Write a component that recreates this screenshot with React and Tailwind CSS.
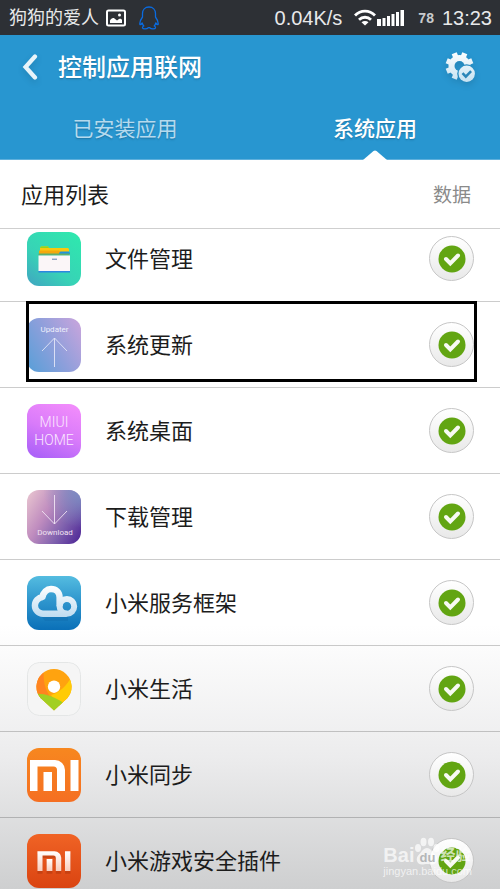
import React, {useState} from 'react'

const fontCjk = "font-['Roboto','Noto_Sans_CJK_SC',sans-serif]"
const iconBox = "w-[54px] h-[54px] rounded-xl shrink-0"

const FilesIcon = () => (
    <svg viewBox="0 0 54 54" className={iconBox} aria-hidden="true">
        <defs>
            <linearGradient id="files" x1="0.9" y1="0" x2="0.1" y2="1">
                <stop offset="0" stopColor="#2fe8ae"/>
                <stop offset="0.6" stopColor="#37d3b6"/>
                <stop offset="1" stopColor="#3fa9c0"/>
            </linearGradient>
        </defs>
        <rect width="54" height="54" fill="url(#files)"/>
        <path d="M13 21V16l1-1.500h7l1 1.500h19l1 1v5H12z" fill="#f9c80e"/>
        <path d="M13 16l1-1.500h7l1 1.500z" fill="#8fd61e"/>
        <path d="M12 18.500h20l2 1.500h8v2H12z" fill="#f5a80c"/>
        <path d="M32 21l1.500-1.500H42l1 1.500v1H32z" fill="#2192dc"/>
        <path d="M11.500 21.500h31v2h-31z" fill="#5fae6e"/>
        <path d="M11.500 23.500h31.500V39H11.500z" fill="#fbf6f8"/>
        <path d="M11.500 39H43v1.500H11.500z" fill="#2c86e0"/>
        <path d="M25 27.200h5" stroke="#5a7fa8" strokeWidth="1"/>
    </svg>
)

const UpdaterIcon = () => (
    <svg viewBox="0 0 54 54" className={iconBox} aria-hidden="true">
        <defs>
            <linearGradient id="updater" x1="0" y1="0.8" x2="1" y2="0.2">
                <stop offset="0" stopColor="#5f9fd8"/>
                <stop offset="0.5" stopColor="#8f9fdb"/>
                <stop offset="1" stopColor="#c2a4dc"/>
            </linearGradient>
        </defs>
        <rect width="54" height="54" fill="url(#updater)"/>
        <text x="27.500" y="14" textAnchor="middle" fontSize="8" fill="#eef0fb" fontFamily="Roboto, sans-serif">Updater</text>
        <path d="M27.500 20v29M15 33l12.500-13L40 33" fill="none" stroke="#e3e6f7" strokeWidth="0.900"/>
    </svg>
)

const HomeIcon = () => (
    <svg viewBox="0 0 54 54" className={iconBox} aria-hidden="true">
        <defs>
            <linearGradient id="home" x1="0.7" y1="0" x2="0.3" y2="1">
                <stop offset="0" stopColor="#f08bfb"/>
                <stop offset="0.5" stopColor="#d97bfa"/>
                <stop offset="1" stopColor="#ae62f8"/>
            </linearGradient>
        </defs>
        <rect width="54" height="54" fill="url(#home)"/>
        <g fill="#fbe9fe" fontSize="14" fontWeight="300" textAnchor="middle" fontFamily="Roboto, sans-serif">
            <text x="27" y="23">MIUI</text>
            <text x="27" y="41">HOME</text>
        </g>
    </svg>
)

const DownloadIcon = () => (
    <svg viewBox="0 0 54 54" className={iconBox} aria-hidden="true">
        <defs>
            <linearGradient id="download" x1="0" y1="0.2" x2="1" y2="0.8">
                <stop offset="0" stopColor="#e2bccd"/>
                <stop offset="0.35" stopColor="#c08dbf"/>
                <stop offset="0.7" stopColor="#8062ae"/>
                <stop offset="1" stopColor="#56309a"/>
            </linearGradient>
            <radialGradient id="downloadGlow" cx="1" cy="0" r="0.7">
                <stop offset="0" stopColor="#7b8fc4"/>
                <stop offset="1" stopColor="#7b8fc4" stopOpacity="0"/>
            </radialGradient>
        </defs>
        <rect width="54" height="54" fill="url(#download)"/>
        <rect width="54" height="54" fill="url(#downloadGlow)"/>
        <path d="M27.500 5v29M15 21l12.500 13L40 21" fill="none" stroke="#f1e4f3" strokeWidth="0.900"/>
        <text x="28" y="44.500" textAnchor="middle" fontSize="8" fill="#f0e2f2" fontFamily="Roboto, sans-serif">Download</text>
    </svg>
)

const CloudIcon = () => (
    <svg viewBox="0 0 54 54" className={iconBox} aria-hidden="true">
        <defs>
            <linearGradient id="sky" x1="0" y1="0" x2="0" y2="1">
                <stop offset="0" stopColor="#54bce0"/>
                <stop offset="0.5" stopColor="#2c93cc"/>
                <stop offset="1" stopColor="#0a70b8"/>
            </linearGradient>
            <linearGradient id="cloud" gradientUnits="userSpaceOnUse" x1="0" y1="10" x2="0" y2="41">
                <stop offset="0" stopColor="#ffffff"/>
                <stop offset="1" stopColor="#bfdcf0"/>
            </linearGradient>
        </defs>
        <rect width="54" height="54" fill="url(#sky)"/>
        <path d="M15 41h26v4H18z" fill="#0b5f9f" opacity="0.250"/>
        <g fill="none" stroke="url(#cloud)" strokeWidth="6.400" strokeLinejoin="round">
            <path d="M39.800 37.700H16A8.200 8.200 0 0 1 7.900 29.500C7.900 25 11.500 21.400 15.600 21C16 16.500 19.800 13 24 13C29 13 32.600 16.500 32.600 21.500V30.300"/>
            <circle cx="39.900" cy="30.400" r="7.300" strokeWidth="6"/>
        </g>
    </svg>
)

const LifeIcon = () => (
    <svg viewBox="0 0 54 54" className={iconBox} aria-hidden="true">
        <defs>
            <clipPath id="pin">
                <path d="M27 48.500L13.500 36A17.600 17.600 0 1 1 40.500 36z"/>
            </clipPath>
        </defs>
        <rect x="0.500" y="0.500" width="53" height="53" rx="12" fill="#f5f5f5" stroke="#e4e6e6"/>
        <g clipPath="url(#pin)">
            <rect width="54" height="54" fill="#ffa30f"/>
            <path d="M0 6h17C15.500 18 18 28 24 36L0 38z" fill="#ff8420"/>
            <path d="M46 12C40 24 33 30 24 33L38 52H54V12z" fill="#ffcb05"/>
            <path d="M8 32C16 31 26 34 36 40.500L30 52H8z" fill="#a2cf22"/>
        </g>
        <circle cx="27" cy="24.700" r="6.200" fill="#fff"/>
    </svg>
)

const MiMark = () => (
    <>
        <path d="M3 12h25a10 10 0 0 1 10 10v21h-8V22a3.500 3.500 0 0 0-3.500-3.500H10.500V43H3z"/>
        <path d="M16.500 24H25v19h-8.500z"/>
        <path d="M43.500 12h8v31h-8z"/>
    </>
)

const SyncIcon = () => (
    <svg viewBox="0 0 54 54" className={iconBox} aria-hidden="true">
        <defs>
            <linearGradient id="sync" x1="0" y1="0" x2="0" y2="1">
                <stop offset="0" stopColor="#f7871f"/>
                <stop offset="1" stopColor="#f56f22"/>
            </linearGradient>
        </defs>
        <rect width="54" height="54" fill="url(#sync)"/>
        <g fill="#fff"><MiMark/></g>
    </svg>
)

const GameIcon = () => (
    <svg viewBox="0 0 54 54" className={iconBox} aria-hidden="true">
        <defs>
            <linearGradient id="game" x1="0" y1="0" x2="0" y2="1">
                <stop offset="0" stopColor="#f06325"/>
                <stop offset="1" stopColor="#da4411"/>
            </linearGradient>
            <linearGradient id="gameMark" x1="0" y1="0" x2="0" y2="1">
                <stop offset="0" stopColor="#ffffff"/>
                <stop offset="1" stopColor="#f9cdbc"/>
            </linearGradient>
        </defs>
        <rect width="54" height="54" fill="url(#game)"/>
        <g transform="translate(8.400 12.200) scale(0.680 0.640)" fill="#a8330c" opacity="0.450"><MiMark/></g>
        <g transform="translate(8.400 9.600) scale(0.680 0.640)" fill="url(#gameMark)"><MiMark/></g>
    </svg>
)

const apps = [
    {id: "files", name: "文件管理", Icon: FilesIcon},
    {id: "updater", name: "系统更新", Icon: UpdaterIcon, framed: true},
    {id: "desktop", name: "系统桌面", Icon: HomeIcon},
    {id: "downloads", name: "下载管理", Icon: DownloadIcon},
    {id: "services", name: "小米服务框架", Icon: CloudIcon},
    {id: "life", name: "小米生活", Icon: LifeIcon},
    {id: "sync", name: "小米同步", Icon: SyncIcon},
    {id: "game", name: "小米游戏安全插件", Icon: GameIcon},
]

const StatusBar = () => (
    <div className="h-[35px] shrink-0 bg-[#2d3035] text-[#e8e9ea] flex items-center pl-[9px] pr-2">
        <span className="text-[18px] leading-6">狗狗的爱人</span>
        <svg viewBox="0 0 20 18" className="w-5 h-[18px] ml-[7px]" aria-hidden="true">
            <rect x="1" y="1.500" width="18" height="15" rx="1.500" fill="none" stroke="#fff" strokeWidth="2"/>
            <path d="M4 14v-2.500c1-2 3-3 4.500-2l2.500 2 2-1.500c1.500-.500 2.500 0 3 1V14z" fill="#fff"/>
            <circle cx="13.500" cy="6" r="1.500" fill="#fff"/>
        </svg>
        <svg viewBox="0 0 20 24" className="w-5 h-6 ml-[13px]" fill="none" stroke="#0a6be0" strokeWidth="1.300" strokeLinejoin="round" aria-hidden="true">
            <path d="M10 1C6 1 3.500 3.800 3.500 7.500V11C2.200 12.800 1 15 .800 17.500c0 1.500.600 1.800 2.400-.500.300 1.300.900 2.200 1.600 3-1.300.600-1.600 1.300-1.300 2 .500 1.200 4.500 1.200 5.800-.300h1.400c1.300 1.500 5.300 1.500 5.800.300.300-.700 0-1.400-1.300-2 .700-.800 1.300-1.700 1.600-3 1.800 2.300 2.400 2 2.400.500C19 15 17.800 12.800 16.500 11V7.500C16.500 3.800 14 1 10 1z"/>
        </svg>
        <div className="ml-auto flex items-center font-['Liberation_Sans',sans-serif]">
            <span className="text-[20px] leading-6">0.04K/s</span>
            <svg viewBox="0 0 22 17" className="w-[22px] h-[17px] ml-3" fill="none" stroke="#fff" strokeWidth="2.800" aria-hidden="true">
                <path d="M1 6.500C6.500.700 15.500.700 21 6.500"/>
                <path d="M5 10.700c3.400-3.300 8.600-3.300 12 0"/>
                <path d="M11 16.500l-3.500-3.300c2-1.600 5-1.600 7 0z" fill="#fff" stroke="none"/>
            </svg>
            <svg viewBox="0 0 27 17" className="w-[27px] h-[17px] ml-px" fill="#fff" aria-hidden="true">
                <path d="M0 10h4v7H0zM5.500 9h3v8h-3zM10 7h3v10h-3zM14.500 5h3v12h-3zM19 3h3v14h-3zM23.500 1H27v16h-3.500z"/>
            </svg>
            <span className="text-[14px] leading-5 ml-[14px] text-[#c9cbcd] font-bold">78</span>
            <span className="text-[20px] leading-6 ml-2">13:23</span>
        </div>
    </div>
)

const GearIcon = () => (
    <svg viewBox="0 0 32 32" className="w-8 h-8 drop-shadow-md" aria-hidden="true">
        <defs>
            <linearGradient id="gear" gradientUnits="userSpaceOnUse" x1="0" y1="0" x2="0" y2="31">
                <stop offset="0" stopColor="#ffffff"/>
                <stop offset="1" stopColor="#c6e2f1"/>
            </linearGradient>
            <mask id="gearCut" maskUnits="userSpaceOnUse" x="0" y="0" width="32" height="32">
                <rect width="32" height="32" fill="#fff"/>
                <circle cx="15.500" cy="15" r="5" fill="#000"/>
                <circle cx="22.700" cy="22.700" r="9.500" fill="#000"/>
            </mask>
        </defs>
        <g mask="url(#gearCut)" fill="url(#gear)">
            <circle cx="15.500" cy="15" r="11"/>
            <path d="M10.200 2.200L20.800 27.800M20.800 2.200L10.200 27.800M2.700 9.700L28.300 20.300M28.300 9.700L2.700 20.300" stroke="url(#gear)" strokeWidth="5.400"/>
        </g>
        <circle cx="22.700" cy="22.700" r="8.200" fill="url(#gear)"/>
        <path d="M18.500 22.200l3.300 3.500 5.300-5.500" fill="none" stroke="#2b86b8" strokeWidth="2.500"/>
    </svg>
)

const Header = ({tab, setTab}) => {
    const tabs = [{id: "installed", name: "已安装应用"}, {id: "system", name: "系统应用"}]
    return (
        <header className="shrink-0 bg-[#2896d0] border-b border-[#5fb0dc] text-white">
            <div className="h-16 flex items-center pl-[22px] pr-6">
                <button type="button" aria-label="返回" className="mr-5">
                    <svg viewBox="0 0 16 26" className="w-4 h-[26px] drop-shadow-md" fill="none" aria-hidden="true">
                        <path d="M13 2.500L3.500 13l9.500 10.500" stroke="#e8f4fa" strokeWidth="4.200" strokeLinecap="round"/>
                    </svg>
                </button>
                <h1 className="pt-0.5 text-[24px] leading-8 font-medium text-shadow-sm">控制应用联网</h1>
                <button type="button" aria-label="设置" className="ml-auto"><GearIcon/></button>
            </div>
            <nav className="h-[60px] flex">
                {tabs.map((t) => (
                    <button
                        key={t.id}
                        type="button"
                        onClick={() => setTab(t.id)}
                        className={tab === t.id
                            ? "relative flex-1 text-[21px] leading-6 font-medium text-shadow-sm"
                            : "relative flex-1 text-[21px] leading-6 text-[#b5daee] text-shadow-sm"}
                    >
                        {t.name}
                        {tab === t.id && (
                            <svg viewBox="0 0 24 10" className="absolute -bottom-px left-1/2 -translate-x-1/2 w-6 h-[10px]" aria-hidden="true">
                                <path d="M0 10L10.500 1q1.500-1 3 0L24 10z" fill="#fff"/>
                            </svg>
                        )}
                    </button>
                ))}
            </nav>
        </header>
    )
}

const AppRow = ({app, checked, toggle}) => (
    <li className="relative h-[86px] border-b border-black/20 flex items-center pl-[27px] pr-[26px]">
        <app.Icon/>
        <label htmlFor={app.id} className="ml-6 pt-[3px] text-[22px] leading-8 text-[#1c1c1c]">{app.name}</label>
        <span className="ml-auto grid place-items-center">
            <input
                id={app.id}
                type="checkbox"
                checked={checked}
                onChange={() => toggle(app.id)}
                className="[grid-area:1/1] appearance-none w-[45px] h-[45px] rounded-full border border-[#c6c6c6] bg-linear-to-b from-white to-[#e9e9e9]"
            />
            {checked && (
                <svg viewBox="0 0 28 28" className="[grid-area:1/1] w-7 h-7 pointer-events-none" aria-hidden="true">
                    <circle cx="14" cy="14" r="13.500" fill="#62a512"/>
                    <path d="M8 14l4.300 4.300 7.700-7.800" fill="none" stroke="#f7faf3" strokeWidth="4" strokeLinecap="round"/>
                </svg>
            )}
        </span>
        {/* marks the row the reader should look at */}
        {app.framed && <span className="absolute left-[26px] right-[23px] -top-px h-[81px] border-[3px] border-black pointer-events-none"/>}
    </li>
)

const Watermark = () => (
    <div className="absolute right-7 bottom-3 text-white/70 pointer-events-none font-['Liberation_Sans','Noto_Sans_CJK_SC',sans-serif]">
        <div className="flex items-end text-[20px] leading-6 font-bold">
            <span>Bai</span>
            <span className="grid place-items-center w-[26px] h-[30px]">
                <svg viewBox="0 0 26 30" className="[grid-area:1/1] w-[26px] h-[30px]" fill="currentColor" aria-hidden="true">
                    <ellipse cx="4" cy="11" rx="3" ry="4"/>
                    <ellipse cx="9.500" cy="5" rx="3" ry="4.200"/>
                    <ellipse cx="17" cy="5" rx="3" ry="4.200"/>
                    <ellipse cx="22.500" cy="11" rx="3" ry="4"/>
                    <path d="M13 11c4 0 5 4 8 6.500 4 3.500 2.500 10-3 10-2 0-3-.500-5-.500s-3 .500-5 .500c-5.500 0-7-6.500-3-10C8 15 9 11 13 11z"/>
                </svg>
                <span className="[grid-area:1/1] pt-3 text-[13px] leading-4 text-[#b4b6b8]">du</span>
            </span>
            <span className="text-[15px] leading-6">经验</span>
        </div>
        <div className="-mt-0.5 text-[11px] leading-3">jingyan.baidu.com</div>
    </div>
)

export default function App() {
    const [tab, setTab] = useState("system")
    const [blocked, setBlocked] = useState([])

    const toggle = (id) => {
        setBlocked((ids) => ids.includes(id) ? ids.filter((x) => x !== id) : [...ids, id])
    }

    return (
        <div className={`relative h-screen flex flex-col bg-white overflow-hidden ${fontCjk}`}>
            <StatusBar/>
            <Header tab={tab} setTab={setTab}/>
            <div className="h-[69px] shrink-0 border-b border-[#cfcfcf] flex items-center justify-between pl-[21px] pr-[29px]">
                <h2 className="pt-[3px] text-[22px] leading-8 text-[#1c1c1c]">应用列表</h2>
                <span className="pt-[3px] text-[19px] leading-8 text-[#8a8a8a]">数据</span>
            </div>
            {/* list is scrolled a little, so the first row starts above the edge */}
            <main className="flex-1 min-h-0 overflow-y-auto [scrollbar-width:none] bg-linear-to-b from-white from-60% via-[#ececed] via-80% to-[#cecfd0]">
                <ul className="-mt-[13px]">
                    {apps.map((app) => (
                        <AppRow key={app.id} app={app} checked={!blocked.includes(app.id)} toggle={toggle}/>
                    ))}
                </ul>
            </main>
            <Watermark/>
        </div>
    )
}
